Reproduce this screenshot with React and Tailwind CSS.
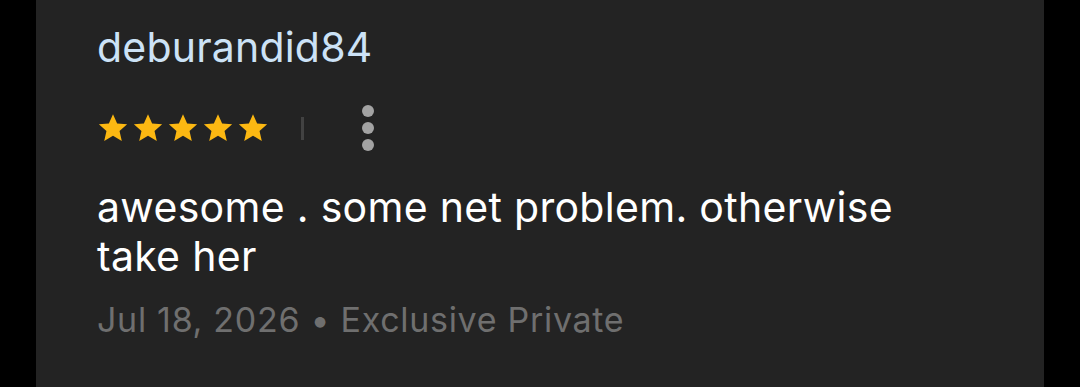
import React from "react";

const Star = () => (
  <svg viewBox="0 0 24 24" className="w-[32px] h-[32px]" fill="#fcb812">
    <path d="M12 1.6l3.1 7 7.5.66-5.7 5 1.7 7.4L12 17.8l-6.6 3.86 1.7-7.4-5.7-5 7.5-.66z" />
  </svg>
);

export default function App() {
  return (
    <div className="w-[1080px] h-[387px] bg-black flex" style={{ fontFamily: "Inter, 'Noto Sans', sans-serif" }}>
      <div className="ml-[36px] w-[1008px] h-full bg-[#232323] pl-[61px] pt-[23px]">
        <div className="text-[41px] leading-[48px] tracking-[0.2px] text-[#cce2f6]">deburandid84</div>
        <div className="flex items-center mt-[32px] h-[50px]">
          <div className="flex gap-[3px]">
            <Star />
            <Star />
            <Star />
            <Star />
            <Star />
          </div>
          <div className="ml-[32px] w-[3px] h-[23px] bg-[#424242]" />
          <div className="ml-[58px] flex flex-col gap-[5px]">
            <div className="w-[12px] h-[12px] rounded-full bg-[#a3a3a3]" />
            <div className="w-[12px] h-[12px] rounded-full bg-[#a3a3a3]" />
            <div className="w-[12px] h-[12px] rounded-full bg-[#a3a3a3]" />
          </div>
        </div>
        <div className="mt-[30px] text-[41px] leading-[49px] tracking-[0.3px] text-white w-[840px]">
          awesome . some net problem. otherwise take her
        </div>
        <div className="mt-[15px] text-[34px] leading-[48px] tracking-[0.7px] text-[#6f6f6f]">
          Jul 18, 2026 • Exclusive Private
        </div>
      </div>
    </div>
  );
}
